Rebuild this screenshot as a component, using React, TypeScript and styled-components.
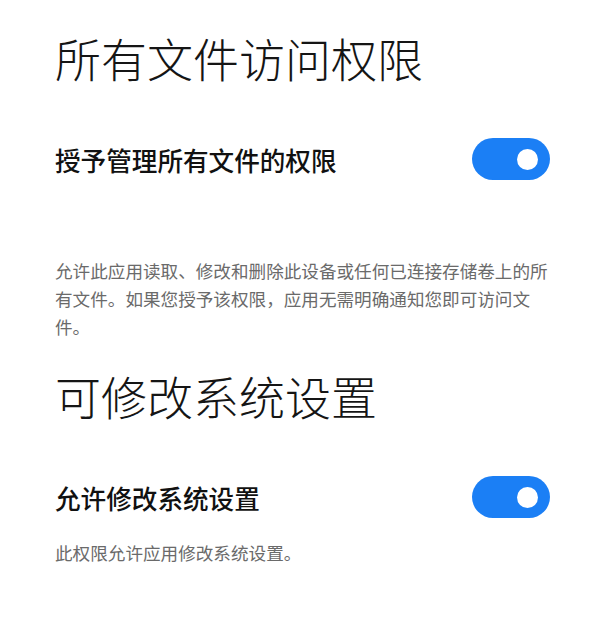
import styled, { createGlobalStyle } from 'styled-components';

const GlobalStyle = createGlobalStyle`
  html, body {
    margin: 0;
    padding: 0;
    background: #ffffff;
  }
  body {
    font-family: "Noto Sans CJK SC", "Noto Sans", sans-serif;
    -webkit-font-smoothing: antialiased;
  }
`;

const Page = styled.main`
  padding: 27px 50px 40px 55px;
  display: flex;
  flex-direction: column;
`;

const Title = styled.h1<{ $top?: number }>`
  margin: ${(p) => p.$top ?? 0}px 0 0;
  font-size: 46px;
  line-height: 60px;
  font-weight: 300;
  color: #151515;
  letter-spacing: 0;
`;

const Row = styled.div<{ $top: number }>`
  margin-top: ${(p) => p.$top}px;
  display: flex;
  align-items: center;
  justify-content: space-between;
  height: 42px;
`;

const Label = styled.span`
  font-size: 25.6px;
  font-weight: 500;
  color: #111;
`;

const Toggle = styled.button<{ $on: boolean }>`
  position: relative;
  width: 78px;
  height: 42px;
  border: none;
  padding: 0;
  border-radius: 21px;
  background: ${(p) => (p.$on ? '#1b7ff5' : '#d9d9d9')};
  cursor: pointer;
  flex-shrink: 0;

  &::after {
    content: '';
    position: absolute;
    top: 50%;
    right: ${(p) => (p.$on ? '12px' : '45px')};
    width: 21px;
    height: 21px;
    margin-top: -10.5px;
    border-radius: 50%;
    background: #fff;
  }
`;

const Desc = styled.p<{ $top: number }>`
  margin: ${(p) => p.$top}px 0 0;
  font-size: 17.6px;
  line-height: 28px;
  color: #6a6a6a;
`;

export default function App() {
  return (
    <>
      <GlobalStyle />
      <Page>
        <Title>所有文件访问权限</Title>
        <Row $top={51}>
          <Label>授予管理所有文件的权限</Label>
          <Toggle $on aria-label="授予管理所有文件的权限" />
        </Row>
        <Desc $top={77}>
          允许此应用读取、修改和删除此设备或任何已连接存储卷上的所有文件。如果您授予该权限，应用无需明确通知您即可访问文件。
        </Desc>

        <Title $top={24}>可修改系统设置</Title>
        <Row $top={51}>
          <Label>允许修改系统设置</Label>
          <Toggle $on aria-label="允许修改系统设置" />
        </Row>
        <Desc $top={21}>此权限允许应用修改系统设置。</Desc>
      </Page>
    </>
  );
}
